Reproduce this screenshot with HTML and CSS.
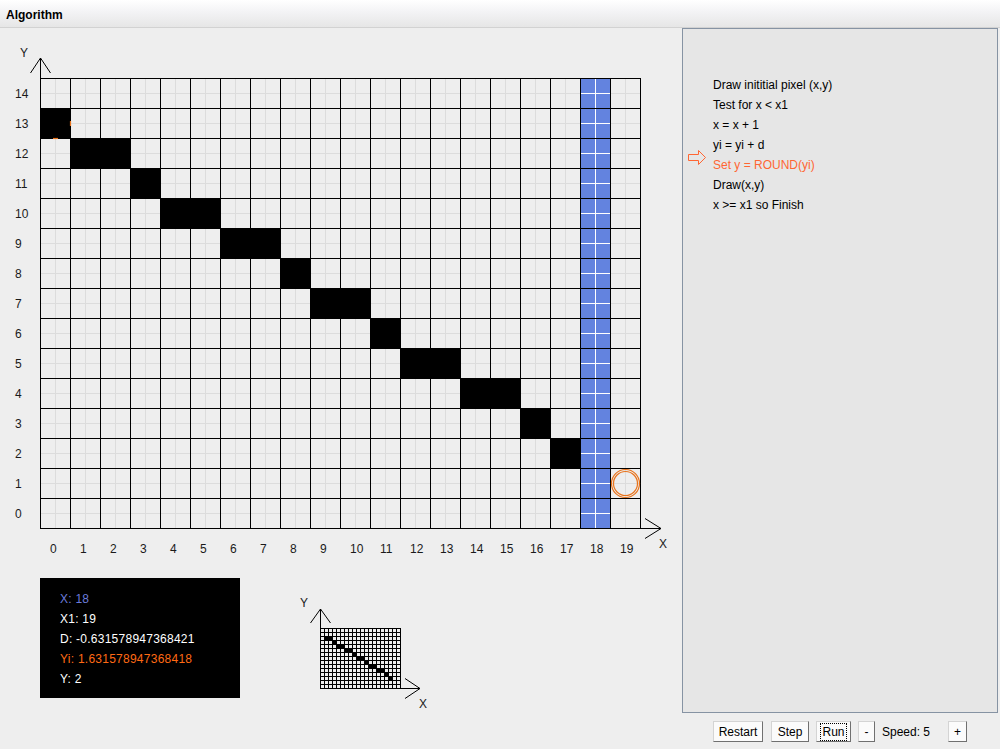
FILE: index.html
```html
<!DOCTYPE html>
<html lang="en">
<head>
  <meta charset="UTF-8" />
  <title>Algorithm</title>
  <link rel="stylesheet" href="styles.css">
</head>
<body>
  <div class="titlebar">Algorithm</div>

  <div class="main">
    <div class="canvas">
      <svg id="grid" class="grid" width="682" height="532" viewBox="0 28 682 532"></svg>

      <div class="below">
        <div class="info">
          <div class="info-x">X: 18</div>
          <div>X1: 19</div>
          <div>D: -0.631578947368421</div>
          <div class="info-yi">Yi: 1.631578947368418</div>
          <div>Y: 2</div>
        </div>
        <svg id="mini" class="mini" width="150" height="120" viewBox="290 590 150 120"></svg>
      </div>
    </div>

    <div class="side">
      <div class="steps">
        <div class="step">Draw inititial pixel (x,y)</div>
        <div class="step">Test for x &lt; x1</div>
        <div class="step">x = x + 1</div>
        <div class="step">yi = yi + d</div>
        <div class="step current">
          <svg class="pointer" width="19" height="15" viewBox="0 0 19 15">
            <polygon points="0.5,4.5 10.5,4.5 10.5,0.5 17.5,7.5 10.5,14.5 10.5,10.5 0.5,10.5" />
          </svg>
          Set y = ROUND(yi)
        </div>
        <div class="step">Draw(x,y)</div>
        <div class="step">x &gt;= x1 so Finish</div>
      </div>

      <div class="controls">
        <button class="btn btn-restart">Restart</button>
        <button class="btn btn-step">Step</button>
        <button class="btn btn-run"><span>Run</span></button>
        <button class="btn btn-small">-</button>
        <span class="speed">Speed: 5</span>
        <button class="btn btn-plus">+</button>
      </div>
    </div>
  </div>

  <script>
    const NS = 'http://www.w3.org/2000/svg';
    const points = [[0,13],[1,12],[2,12],[3,11],[4,10],[5,10],[6,9],[7,9],[8,8],
                    [9,7],[10,7],[11,6],[12,5],[13,5],[14,4],[15,4],[16,3],[17,2]];

    function add(parent, tag, attrs, text) {
      const node = document.createElementNS(NS, tag);
      for (const k in attrs) node.setAttribute(k, attrs[k]);
      if (text !== undefined) node.textContent = text;
      parent.appendChild(node);
      return node;
    }

    function line(parent, x1, y1, x2, y2, cls) {
      return add(parent, 'line', { x1, y1, x2, y2, class: cls });
    }

    // big grid: 20 x 15 cells of 30px, origin at bottom-left
    const g = document.getElementById('grid');
    const X0 = 40, Y0 = 78, C = 30, COLS = 20, ROWS = 15;
    const cellY = y => Y0 + (ROWS - 1 - y) * C;

    for (let i = 0; i < COLS; i++) {
      line(g, X0 + i * C + 15.5, Y0, X0 + i * C + 15.5, Y0 + ROWS * C, 'sub');
    }
    for (let j = 0; j < ROWS; j++) {
      line(g, X0, Y0 + j * C + 15.5, X0 + COLS * C, Y0 + j * C + 15.5, 'sub');
    }

    // current column
    const colX = X0 + 18 * C;
    add(g, 'rect', { x: colX, y: Y0, width: C, height: ROWS * C, class: 'current-col' });
    line(g, colX + 15.5, Y0, colX + 15.5, Y0 + ROWS * C, 'sub-white');
    for (let j = 0; j < ROWS; j++) {
      line(g, colX, Y0 + j * C + 15.5, colX + C, Y0 + j * C + 15.5, 'sub-white');
    }

    points.forEach(([x, y]) => {
      add(g, 'rect', { x: X0 + x * C, y: cellY(y), width: C, height: C, class: 'pixel' });
    });

    for (let i = 0; i <= COLS; i++) {
      line(g, X0 + i * C + 0.5, Y0, X0 + i * C + 0.5, Y0 + ROWS * C + 1, 'main');
    }
    for (let j = 0; j <= ROWS; j++) {
      line(g, X0, Y0 + j * C + 0.5, X0 + COLS * C + 1, Y0 + j * C + 0.5, 'main');
    }

    // axes
    line(g, 40.5, 78, 40.5, 58, 'axis');
    line(g, 40.5, 58, 30.5, 73, 'axis');
    line(g, 40.5, 58, 50.5, 73, 'axis');
    add(g, 'text', { x: 20, y: 57, class: 'label' }, 'Y');
    line(g, 640, 528.5, 661, 528.5, 'axis');
    line(g, 661, 528.5, 645, 518.5, 'axis');
    line(g, 661, 528.5, 645, 538.5, 'axis');
    add(g, 'text', { x: 659, y: 548, class: 'label' }, 'X');

    for (let y = 0; y < ROWS; y++) {
      add(g, 'text', { x: 15, y: cellY(y) + 20, class: 'label' }, String(y));
    }
    for (let x = 0; x < COLS; x++) {
      add(g, 'text', { x: X0 + x * C + 10, y: 553, class: 'label' }, String(x));
    }

    // marker on the next pixel, and what's left of the old one
    add(g, 'circle', { cx: 625.5, cy: 483.5, r: 14, class: 'marker' });
    add(g, 'circle', { cx: 625.5, cy: 483.5, r: 12, class: 'marker' });
    line(g, 70.5, 121, 70.5, 126, 'marker');
    line(g, 53, 138.5, 58, 138.5, 'marker');

    // mini preview: 20 x 15 cells of 4px
    const m = document.getElementById('mini');
    const MX = 320, MY = 628, MC = 4;
    points.slice(1).forEach(([x, y]) => {
      add(m, 'rect', { x: MX + x * MC, y: MY + (ROWS - 1 - y) * MC, width: MC, height: MC, class: 'pixel' });
    });
    for (let i = 0; i <= COLS; i++) {
      line(m, MX + i * MC + 0.5, MY, MX + i * MC + 0.5, MY + ROWS * MC + 1, 'main');
    }
    for (let j = 0; j <= ROWS; j++) {
      line(m, MX, MY + j * MC + 0.5, MX + COLS * MC + 1, MY + j * MC + 0.5, 'main');
    }
    line(m, 320.5, 628, 320.5, 609, 'axis');
    line(m, 320.5, 609, 310.5, 623, 'axis');
    line(m, 320.5, 609, 330.5, 623, 'axis');
    add(m, 'text', { x: 300, y: 607, class: 'label' }, 'Y');
    line(m, 400, 688.5, 420, 688.5, 'axis');
    line(m, 420, 688.5, 405, 678.5, 'axis');
    line(m, 420, 688.5, 405, 698.5, 'axis');
    add(m, 'text', { x: 419, y: 708, class: 'label' }, 'X');
  </script>
</body>
</html>
```

FILE: styles.css
```css
body {
  margin: 0;
  font-family: "Liberation Sans", Arial, sans-serif;
  font-size: 12px;
  background-color: #eeeeee;
  color: #000000;
  width: 1000px;
  height: 749px;
  overflow: hidden;
}

.titlebar {
  box-sizing: border-box;
  height: 28px;
  line-height: 30px;
  padding-left: 6px;
  font-weight: bold;
  background: linear-gradient(#ffffff, #f4f4f6 40%, #e6e6e6);
  border-bottom: 1px solid #d2d2d2;
}

.main {
  display: flex;
  height: 721px;
}

.canvas {
  width: 682px;
  display: flex;
  flex-direction: column;
}

.grid,
.mini {
  display: block;
  shape-rendering: crispEdges;
}

.grid .sub {
  stroke: #dcdcdc;
  stroke-width: 1;
}

.grid .sub-white {
  stroke: #ffffff;
  stroke-width: 1;
}

.current-col {
  fill: #6383df;
}

.pixel {
  fill: #000000;
}

svg .main {
  stroke: #000000;
  stroke-width: 1;
}

svg .axis {
  stroke: #000000;
  stroke-width: 1;
  shape-rendering: auto;
}

svg .label {
  font-family: "Liberation Sans", Arial, sans-serif;
  font-size: 12px;
  fill: #1a1a1a;
}

svg .marker {
  fill: none;
  stroke: #e8731c;
  stroke-width: 1.2;
  shape-rendering: auto;
}

.below {
  display: flex;
  align-items: flex-start;
  margin-top: 18px;
}

.info {
  width: 200px;
  height: 120px;
  box-sizing: border-box;
  margin-left: 40px;
  padding: 11px 0 0 20px;
  background-color: #000000;
  color: #ffffff;
  line-height: 20px;
  letter-spacing: 0.25px;
}

.info-x {
  color: #6b7bdb;
}

.info-yi {
  color: #ff6a14;
}

.mini {
  margin-left: 50px;
  margin-top: 12px;
}

.side {
  width: 316px;
  display: flex;
  flex-direction: column;
}

.steps {
  height: 685px;
  box-sizing: border-box;
  border: 1px solid #8693a3;
  background-color: #e6e6e6;
  padding: 46px 0 0 30px;
}

.step {
  position: relative;
  line-height: 20px;
}

.step.current {
  color: #ff6633;
}

.pointer {
  position: absolute;
  left: -25px;
  top: -5px;
}

.pointer polygon {
  fill: none;
  stroke: #ff6633;
  stroke-width: 1;
}

.controls {
  display: flex;
  align-items: center;
  gap: 7px;
  padding: 8px 0 0 31px;
}

.btn {
  height: 21px;
  margin: 0;
  padding: 0;
  font-family: "Liberation Sans", Arial, sans-serif;
  font-size: 12px;
  color: #000000;
  background-color: #fbfbfb;
  border: 1px solid #d4d4d4;
  border-right-color: #707070;
  border-bottom-color: #707070;
  border-radius: 0;
}

.btn-restart {
  width: 50px;
}

.btn-step {
  width: 38px;
  margin-left: 1px;
}

.btn-run {
  width: 35px;
}

.btn-run span {
  border: 1px dotted #000000;
  padding: 1px 1px;
}

.btn-small {
  width: 17px;
}

.btn-plus {
  width: 19px;
}

.speed {
  width: 59px;
}
```
